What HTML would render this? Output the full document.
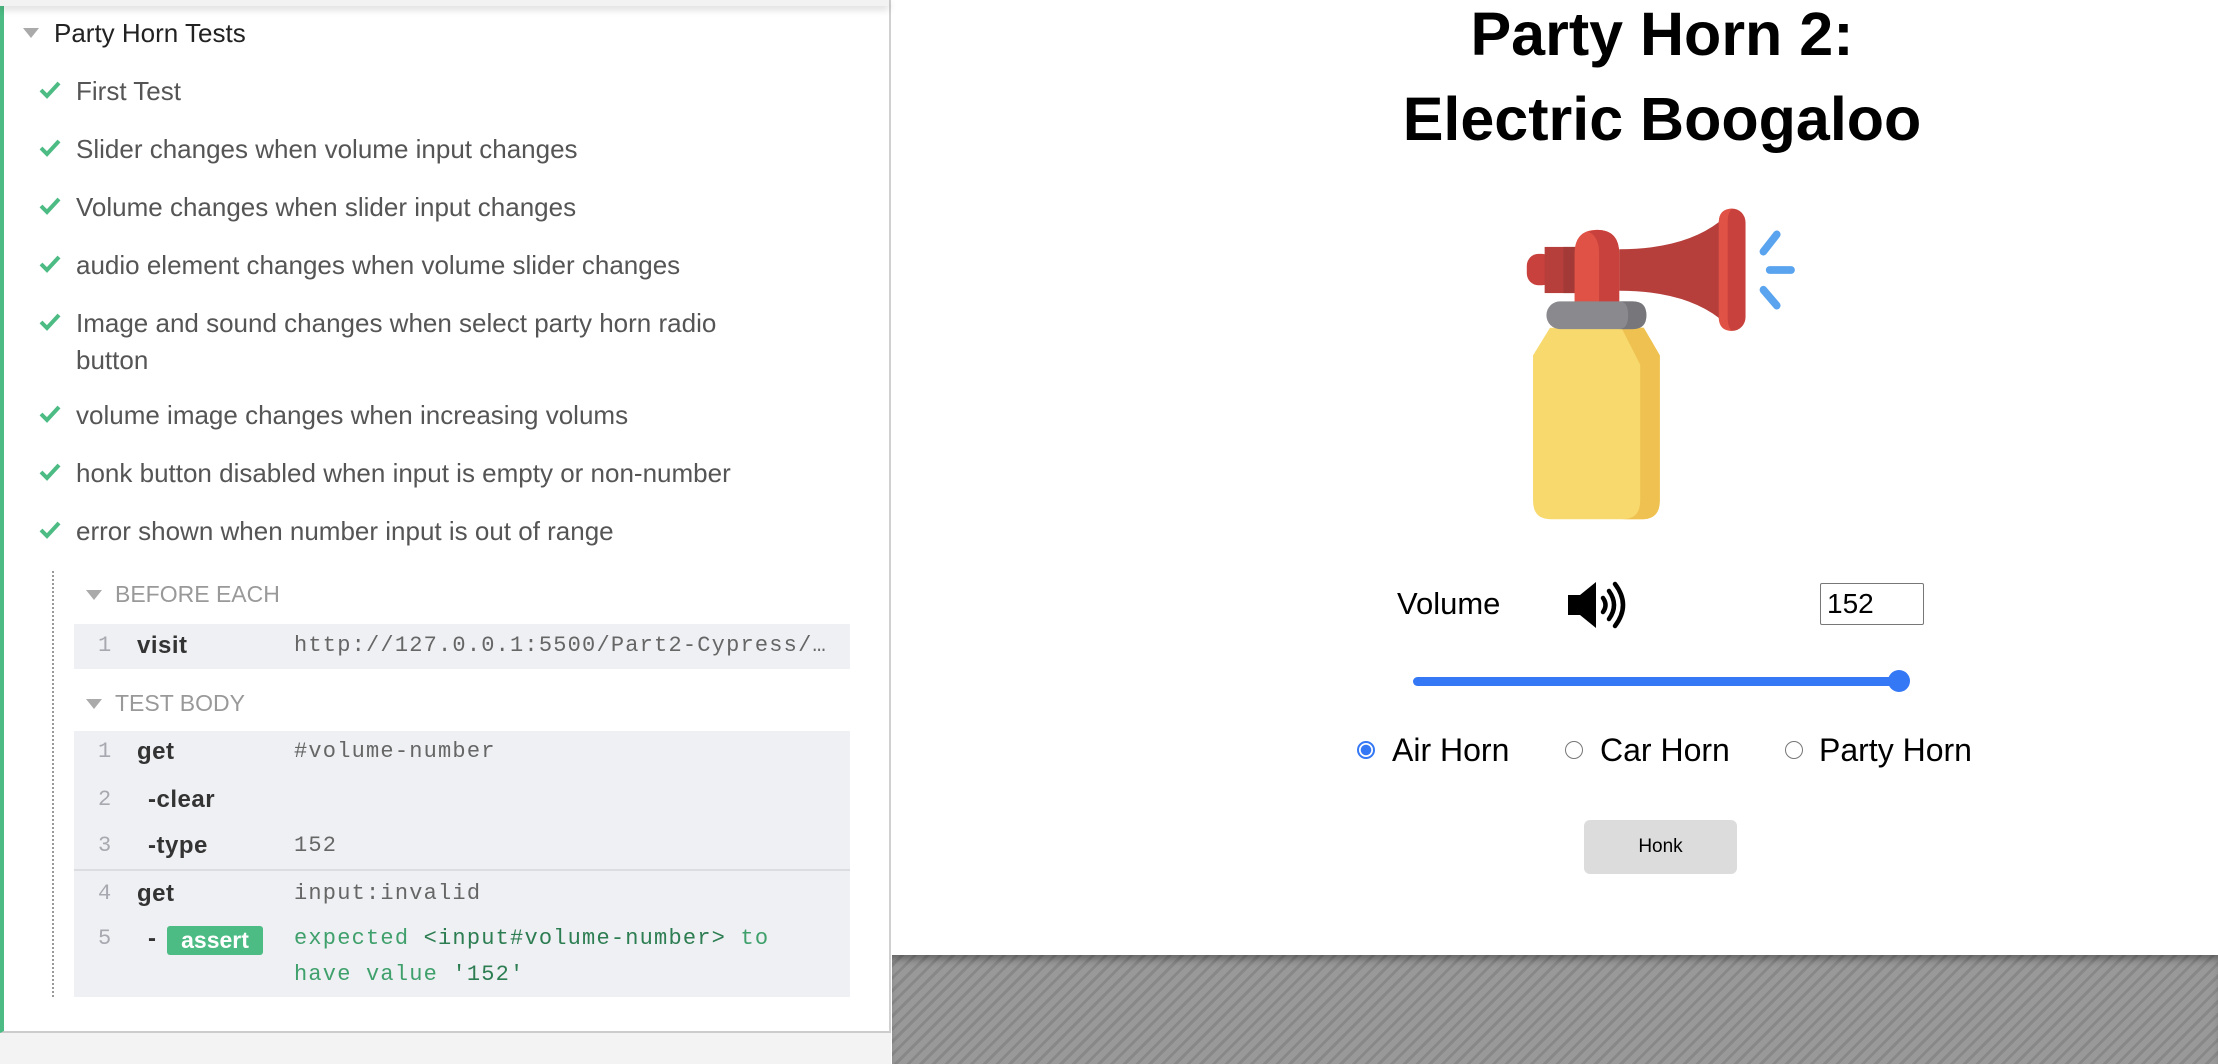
<!DOCTYPE html>
<html><head><meta charset="utf-8"><style>
*{margin:0;padding:0;box-sizing:border-box}
body{width:2218px;height:1064px;position:relative;overflow:hidden;background:#fff;font-family:"Liberation Sans",sans-serif}
.a{position:absolute;white-space:nowrap}
#lp{position:absolute;left:0;top:0;width:891px;height:1033px;background:#fff;border-left:4px solid #4cbb84;border-right:2px solid #d0d0d0;border-bottom:2px solid #ccc}
#lpb{position:absolute;left:0;top:1033px;width:891px;height:31px;background:#f3f3f3}
#topbar{position:absolute;left:0;top:0;width:889px;height:6px;background:#f2f2f2;box-shadow:0 3px 8px rgba(0,0,0,.18)}
.t{font-size:26px;color:#555;left:76px;line-height:36px;transform:translateY(-17px)}
.ck{left:38px;width:24px;height:24px;transform:translateY(-12px)}
.tri{width:0;height:0;border-left:8px solid transparent;border-right:8px solid transparent;border-top:10px solid #aaa}
.box{position:absolute;left:74px;width:776px;background:#eef0f3}
.m{font-family:"Liberation Mono",monospace;font-size:22px;letter-spacing:1.2px;line-height:30px;transform:translateY(-15px)}
.n{color:#a8a8b0;left:98px}
.c{color:#333;font-weight:bold;left:137px;font-family:"Liberation Sans",sans-serif;font-size:24px;letter-spacing:0.5px}
.v{color:#666;left:294px}
.g{color:#3fa06c}
#gray{position:absolute;left:892px;top:955px;width:1326px;height:109px;background:repeating-linear-gradient(135deg,#999 0 6px,#888 6px 9px);box-shadow:inset 0 8px 8px -4px rgba(0,0,0,.35)}
.r{font-size:32px;color:#000;line-height:36px;transform:translateY(-18px)}
.rad{width:18px;height:18px;border-radius:50%;border:1.5px solid #777;background:#fff;transform:translate(-9px,-9px)}
</style></head><body>
<div id="lp"></div>
<div id="lpb"></div>
<div id="topbar"></div>
<div class="a tri" style="left:23px;top:28px"></div>
<div class="a" style="left:54px;top:15px;font-size:26px;color:#222;line-height:36px">Party Horn Tests</div>

<svg class="a ck" style="top:90px" viewBox="0 0 24 24"><path d="M3 12 L9 18 L21 5" fill="none" stroke="#4cbb84" stroke-width="4"/></svg>
<div class="a t" style="top:90px">First Test</div>
<svg class="a ck" style="top:148px" viewBox="0 0 24 24"><path d="M3 12 L9 18 L21 5" fill="none" stroke="#4cbb84" stroke-width="4"/></svg>
<div class="a t" style="top:148px">Slider changes when volume input changes</div>
<svg class="a ck" style="top:206px" viewBox="0 0 24 24"><path d="M3 12 L9 18 L21 5" fill="none" stroke="#4cbb84" stroke-width="4"/></svg>
<div class="a t" style="top:206px">Volume changes when slider input changes</div>
<svg class="a ck" style="top:264px" viewBox="0 0 24 24"><path d="M3 12 L9 18 L21 5" fill="none" stroke="#4cbb84" stroke-width="4"/></svg>
<div class="a t" style="top:264px">audio element changes when volume slider changes</div>
<svg class="a ck" style="top:322px" viewBox="0 0 24 24"><path d="M3 12 L9 18 L21 5" fill="none" stroke="#4cbb84" stroke-width="4"/></svg>
<div class="a t" style="top:322px">Image and sound changes when select party horn radio</div>
<div class="a t" style="top:359px">button</div>
<svg class="a ck" style="top:414px" viewBox="0 0 24 24"><path d="M3 12 L9 18 L21 5" fill="none" stroke="#4cbb84" stroke-width="4"/></svg>
<div class="a t" style="top:414px">volume image changes when increasing volums</div>
<svg class="a ck" style="top:472px" viewBox="0 0 24 24"><path d="M3 12 L9 18 L21 5" fill="none" stroke="#4cbb84" stroke-width="4"/></svg>
<div class="a t" style="top:472px">honk button disabled when input is empty or non-number</div>
<svg class="a ck" style="top:530px" viewBox="0 0 24 24"><path d="M3 12 L9 18 L21 5" fill="none" stroke="#4cbb84" stroke-width="4"/></svg>
<div class="a t" style="top:530px">error shown when number input is out of range</div>

<div class="a" style="left:52px;top:571px;height:426px;border-left:2px dotted #999"></div>
<div class="a tri" style="left:86px;top:590px;border-top-color:#aaa"></div>
<div class="a" style="left:115px;top:581px;font-size:23px;color:#999;line-height:26px">BEFORE EACH</div>
<div class="box" style="top:624px;height:45px"></div>
<div class="a m n" style="top:646px">1</div>
<div class="a m c" style="top:646px">visit</div>
<div class="a m v" style="top:646px">http://127.0.0.1:5500/Part2-Cypress/…</div>

<div class="a tri" style="left:86px;top:699px"></div>
<div class="a" style="left:115px;top:690px;font-size:23px;color:#999;line-height:26px">TEST BODY</div>
<div class="box" style="top:731px;height:266px"></div>
<div class="a" style="left:74px;top:869px;width:776px;height:2px;background:#dcdde0"></div>
<div class="a m n" style="top:752px">1</div><div class="a m c" style="top:752px">get</div><div class="a m v" style="top:752px">#volume-number</div>
<div class="a m n" style="top:800px">2</div><div class="a m c" style="top:800px;left:148px">-clear</div>
<div class="a m n" style="top:846px">3</div><div class="a m c" style="top:846px;left:148px">-type</div><div class="a m v" style="top:846px">152</div>
<div class="a m n" style="top:894px">4</div><div class="a m c" style="top:894px">get</div><div class="a m v" style="top:894px">input:invalid</div>
<div class="a m n" style="top:939px">5</div><div class="a m c" style="top:939px;left:148px">-</div>
<div class="a" style="left:167px;top:926px;width:96px;height:29px;background:#4cbb84;border-radius:3px;color:#fff;font-size:23px;font-weight:bold;line-height:29px;text-align:center">assert</div>
<div class="a m g" style="top:939px;left:294px">expected <span style="color:#2d7d52">&lt;input#volume-number&gt;</span> to</div>
<div class="a m g" style="top:975px;left:294px">have value <span style="color:#2d7d52">'152'</span></div>

<!-- right -->
<div class="a" style="left:1362px;width:600px;top:-8px;text-align:center;font-size:61px;font-weight:bold;line-height:85px;color:#000">Party Horn 2:<br>Electric Boogaloo</div>

<svg class="a" style="left:1300px;top:180px" width="700" height="720" viewBox="0 0 1568 1560" preserveAspectRatio="none">
<path d="M560,320 L770,320 L806,380 L806,695 Q806,735 766,735 L562,735 Q522,735 522,695 L522,380 Z" fill="#f7d96e"/>
<path d="M720,320 L770,320 L806,380 L806,695 Q806,735 766,735 L722,735 Q762,735 762,695 L762,400 Z" fill="#efc150"/>
<path d="M715,150 Q860,150 940,90 L940,300 Q860,240 715,240 Z" fill="#b63f3c"/>
<rect x="508" y="160" width="60" height="68" rx="26" fill="#c8413c"/>
<rect x="548" y="145" width="75" height="100" fill="#b63f3c"/>
<rect x="590" y="145" width="33" height="100" fill="#a33a37"/>
<path d="M615,160 Q615,108 665,108 Q715,108 715,160 L715,268 L615,268 Z" fill="#e05245"/>
<path d="M665,108 Q715,108 715,160 L715,268 L670,268 L670,160 Q670,120 645,112 Z" fill="#c8413c"/>
<rect x="552" y="263" width="224" height="60" rx="30" fill="#8a898e"/>
<path d="M715,263 L746,263 Q776,263 776,293 Q776,323 746,323 L715,323 Q735,323 735,293 Q735,263 715,263Z" fill="#77767b"/>
<rect x="938" y="62" width="60" height="265" rx="30" fill="#c8413c"/>
<path d="M968,62 Q938,62 938,92 L938,297 Q938,327 968,327 Q958,320 958,297 L958,92 Q958,70 968,62Z" fill="#e05245"/>
<g stroke="#5aa4ef" stroke-width="17" stroke-linecap="round"><line x1="1038" y1="155" x2="1068" y2="118"/><line x1="1052" y1="195" x2="1100" y2="195"/><line x1="1038" y1="238" x2="1068" y2="272"/></g>
</svg>

<div class="a" style="left:1397px;top:586px;font-size:31px;line-height:36px">Volume</div>
<svg class="a" style="left:1566px;top:579px" width="64" height="52" viewBox="0 0 64 52">
<path d="M2 16 H14 L30 3 V49 L14 36 H2 Z" fill="#000"/>
<g fill="none" stroke="#000" stroke-width="4.5" stroke-linecap="round"><path d="M37 19 Q42 26 37 33"/><path d="M43 12 Q53 26 43 40"/><path d="M49 5 Q65 26 49 47"/></g>
</svg>
<div class="a" style="left:1820px;top:583px;width:104px;height:42px;border:1.5px solid #777;border-radius:2px;font-size:28px;line-height:39px;padding-left:6px">152</div>

<div class="a" style="left:1413px;top:677px;width:494px;height:9px;border-radius:5px;background:#3478f6"></div>
<div class="a" style="left:1888px;top:670px;width:22px;height:22px;border-radius:50%;background:#3478f6"></div>

<div class="a" style="left:1357px;top:741px;width:18px;height:18px;border-radius:50%;border:2px solid #3478f6;background:radial-gradient(circle,#3478f6 0 5px,#fff 5.5px)"></div>
<div class="a r" style="left:1392px;top:750px">Air Horn</div>
<div class="a rad" style="left:1574px;top:750px"></div>
<div class="a r" style="left:1600px;top:750px">Car Horn</div>
<div class="a rad" style="left:1794px;top:750px"></div>
<div class="a r" style="left:1819px;top:750px">Party Horn</div>

<div class="a" style="left:1584px;top:820px;width:153px;height:54px;background:#dcdcdc;border-radius:6px;font-size:19px;line-height:54px;text-align:center">Honk</div>

<div id="gray"></div>
</body></html>
